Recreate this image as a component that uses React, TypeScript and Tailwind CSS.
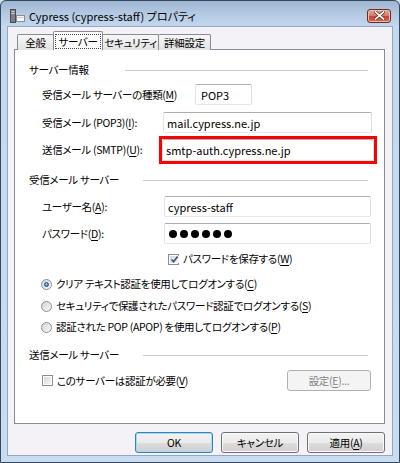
import React from "react";

const font = "font-['Noto_Sans_CJK_JP','Noto_Sans',sans-serif] [font-feature-settings:'palt']";

function U({ children }: { children: React.ReactNode }) {
  return <span className="underline underline-offset-[2px] decoration-[1px]">{children}</span>;
}

function Field({ className, children }: { className: string; children?: React.ReactNode }) {
  return (
    <div
      className={
        "h-[21px] rounded-[2px] border border-t-[#abadb3] border-l-[#e2e3ea] border-r-[#dbdfe6] border-b-[#e3e9ef] bg-white flex items-center pl-[3px] text-[11px] tracking-normal text-black shrink-0 whitespace-nowrap " +
        className
      }
    >
      {children}
    </div>
  );
}

function Header({ label, wClass, mClass }: { label: string; wClass: string; mClass: string }) {
  return (
    <div className={"h-[16px] flex items-center pl-[14px] pr-[16px] " + mClass}>
      <div className={"shrink-0 leading-[16px] whitespace-nowrap " + wClass}>{label}</div>
      <div className="flex-1 h-px bg-[#c9c9c9]" />
    </div>
  );
}

function Check({ checked }: { checked?: boolean }) {
  return (
    <span className="w-[11px] h-[11px] shrink-0 border border-[#8f8f8f] bg-white p-[1px] flex">
      <span className="flex-1 bg-[linear-gradient(135deg,#d7d7d7,#f7f7f7)] flex items-center justify-center">
        {checked && (
          <svg width="9" height="9" viewBox="0 0 9 9">
            <path d="M1.5 4.5 L3.6 6.8 L7.6 1.6" fill="none" stroke="#3b4f7e" strokeWidth="1.6" />
          </svg>
        )}
      </span>
    </span>
  );
}

function Radio({ checked }: { checked?: boolean }) {
  return (
    <span className="w-[11px] h-[11px] shrink-0 rounded-full border border-[#8f8f8f] bg-[linear-gradient(135deg,#d4d4d4,#f8f8f8)] flex items-center justify-center">
      {checked && (
        <span className="w-[5px] h-[5px] rounded-full bg-[radial-gradient(circle_at_40%_35%,#8fd3ff,#1e65b8)] border border-[#1d4f8a]" />
      )}
    </span>
  );
}

function Btn({ children, def, className }: { children: React.ReactNode; def?: boolean; className?: string }) {
  return (
    <div
      className={
        "h-[21px] rounded-[3px] border flex items-center justify-center text-black whitespace-nowrap bg-[linear-gradient(to_bottom,#f2f2f2_0%,#ebebeb_50%,#dddddd_50%,#cfcfcf_100%)] " +
        (def
          ? "border-[#3c7fb1] shadow-[inset_0_0_0_1px_#9fdcf6] "
          : "border-[#707070] shadow-[inset_0_0_0_1px_#fbfbfb] ") +
        (className || "")
      }
    >
      {children}
    </div>
  );
}

const tabOff =
  "h-[16px] -ml-px border border-[#898c95] border-b-0 rounded-t-[2px] bg-[linear-gradient(to_bottom,#f7f7f7,#e3e3e3)] flex items-center justify-center whitespace-nowrap";

export default function App() {
  return (
    <div className={"w-[400px] h-[463px] overflow-hidden bg-[#cfe0f2] " + font}>
      <div className="w-[400px] h-[463px] rounded-t-[6px] border border-[#35485e] bg-[linear-gradient(to_bottom,#9db6d2_0px,#b3c9e2_12px,#c4d8ee_26px,#c9dcf1_100%)] flex flex-col">
        {/* title bar */}
        <div className="h-[25px] shrink-0 flex items-center pt-[4px]">
          <div className="ml-[8px] w-[16px] h-[14px] shrink-0">
            <svg width="16" height="14" viewBox="0 0 16 14">
              <rect x="1.5" y="0.5" width="5" height="13" fill="#7d7f84" stroke="#4b4d52" />
              <rect x="2.5" y="2" width="3" height="1" fill="#d4d6da" />
              <rect x="2.5" y="4" width="3" height="1" fill="#d4d6da" />
              <rect x="7.5" y="6.5" width="8" height="6" fill="#f4f6f8" stroke="#8a8d92" />
              <rect x="8.5" y="8" width="6" height="1" fill="#c9ccd1" />
            </svg>
          </div>
          <span className="ml-[4px] text-[11px] leading-[16px] text-black whitespace-nowrap">Cypress (cypress-staff) プロパティ</span>
          <div className="ml-auto mr-[8px] w-[24px] h-[14px] rounded-[3px] border border-[#6f2a20] bg-[linear-gradient(to_bottom,#e9a99a_0%,#d8806c_45%,#c4472f_55%,#d76a4e_100%)] shadow-[inset_0_0_0_1px_#f0b9ab] flex items-center justify-center">
            <svg width="11" height="9" viewBox="0 0 11 9">
              <path d="M1.5 1 L9.5 8 M9.5 1 L1.5 8" stroke="#5a2a22" strokeWidth="3.2" strokeLinecap="square" />
              <path d="M1.5 1 L9.5 8 M9.5 1 L1.5 8" stroke="#ffffff" strokeWidth="1.7" strokeLinecap="square" />
            </svg>
          </div>
        </div>

        {/* client */}
        <div className="mx-[6px] h-[430px] shrink-0 border border-[#8fa8c6] bg-[#f4f2f6] flex flex-col text-[10.5px] tracking-[-0.3px]">
          {/* tabs */}
          <div className="mt-[4px] ml-[9px] h-[19px] -mb-px flex items-end relative z-10 text-black">
            <div className={"w-[37px] ml-0 " + tabOff}>全般</div>
            <div className="w-[50px] h-[19px] -ml-px border border-[#898c95] border-b-0 rounded-t-[2px] bg-white flex items-center justify-center whitespace-nowrap">
              <span className="px-[2px] leading-[13px] border border-dotted border-[#444]">サーバー</span>
            </div>
            <div className={"w-[57px] " + tabOff}>セキュリティ</div>
            <div className={"w-[53px] " + tabOff}>詳細設定</div>
          </div>

          {/* panel */}
          <div className="ml-[6px] w-[371px] h-[375px] shrink-0 border border-[#898c95] bg-white flex flex-col leading-[16px] text-black whitespace-nowrap">
            <Header label="サーバー情報" wClass="w-[96px]" mClass="mt-[12px]" />

            <div className="mt-[6px] h-[21px] flex items-center">
              <div className="w-[180px] pl-[27px] shrink-0">
                受信メール サーバーの種類(<U>M</U>)
              </div>
              <Field className="w-[57px] pl-[5px]">POP3</Field>
            </div>

            <div className="mt-[7px] h-[21px] flex items-center">
              <div className="w-[148px] pl-[27px] shrink-0">
                受信メール (POP3)(<U>I</U>):
              </div>
              <Field className="w-[209px]">mail.cypress.ne.jp</Field>
            </div>

            <div className="mt-[3px] h-[28px] flex items-center">
              <div className="w-[144px] pl-[27px] shrink-0">
                送信メール (SMTP)(<U>U</U>):
              </div>
              <div className="w-[218px] h-[28px] border-[3px] border-[#ff0000] flex">
                <Field className="w-full h-full">smtp-auth.cypress.ne.jp</Field>
              </div>
            </div>

            <Header label="受信メール サーバー" wClass="w-[114px]" mClass="mt-[8px]" />

            <div className="mt-[8px] h-[21px] flex items-center">
              <div className="w-[149px] pl-[27px] shrink-0">
                ユーザー名(<U>A</U>):
              </div>
              <Field className="w-[207px]">cypress-staff</Field>
            </div>

            <div className="mt-[6px] h-[21px] flex items-center">
              <div className="w-[149px] pl-[27px] shrink-0">
                パスワード(<U>D</U>):
              </div>
              <Field className="w-[207px] pl-[4px] gap-[3px]">
                <span className="w-[8px] h-[8px] rounded-full bg-black" />
                <span className="w-[8px] h-[8px] rounded-full bg-black" />
                <span className="w-[8px] h-[8px] rounded-full bg-black" />
                <span className="w-[8px] h-[8px] rounded-full bg-black" />
                <span className="w-[8px] h-[8px] rounded-full bg-black" />
                <span className="w-[8px] h-[8px] rounded-full bg-black" />
              </Field>
            </div>

            <div className="mt-[7px] h-[16px] flex items-center pl-[153px]">
              <Check checked />
              <span className="ml-[4px]">
                パスワードを保存する(<U>W</U>)
              </span>
            </div>

            <div className="mt-[9px] h-[16px] flex items-center pl-[26px]">
              <Radio checked />
              <span className="ml-[4px]">
                クリア テキスト認証を使用してログオンする(<U>C</U>)
              </span>
            </div>
            <div className="mt-[6px] h-[16px] flex items-center pl-[26px]">
              <Radio />
              <span className="ml-[4px]">
                セキュリティで保護されたパスワード認証でログオンする(<U>S</U>)
              </span>
            </div>
            <div className="mt-[5px] h-[16px] flex items-center pl-[26px]">
              <Radio />
              <span className="ml-[4px]">
                認証された POP (APOP) を使用してログオンする(<U>P</U>)
              </span>
            </div>

            <Header label="送信メール サーバー" wClass="w-[114px]" mClass="mt-[12px]" />

            <div className="mt-[7px] h-[21px] flex items-center pl-[27px] pr-[13px]">
              <Check />
              <span className="ml-[4px]">
                このサーバーは認証が必要(<U>V</U>)
              </span>
              <div className="ml-auto w-[84px] h-[21px] rounded-[3px] border border-[#adb2b5] bg-[#f4f4f4] flex items-center justify-center text-[#838383]">
                設定(<U>E</U>)...
              </div>
            </div>
          </div>

          {/* buttons */}
          <div className="mt-[8px] flex justify-end pr-[7px] gap-[8px]">
            <Btn def className="w-[78px]">OK</Btn>
            <Btn className="w-[78px]">キャンセル</Btn>
            <Btn className="w-[78px]">
              適用(<U>A</U>)
            </Btn>
          </div>
        </div>
      </div>
    </div>
  );
}
